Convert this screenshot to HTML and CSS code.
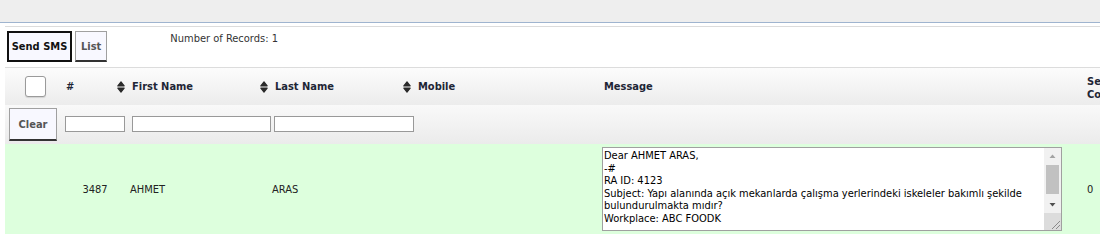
FILE: index.html
```html
<!DOCTYPE html>
<html>
<head>
<meta charset="utf-8">
<link rel="stylesheet" href="styles.css">
</head>
<body>
<div class="topbar"></div>
<div class="page">
  <div class="toolbar">
    <button class="btn btn-primary">Send SMS</button>
    <button class="btn">List</button>
    <div class="records">Number of Records: 1</div>
  </div>
  <div class="grid">
    <div class="row head">
      <div class="cell c-check"><input type="checkbox" class="chk"></div>
      <div class="cell">#</div>
      <div class="cell"><svg class="sort" viewBox="0 0 8 12" width="8" height="12"><path d="M4 0.8 L7.2 4.9 L0.8 4.9 Z M0.8 7.1 L7.2 7.1 L4 11.2 Z" fill="#2a2a2a" stroke="#2a2a2a" stroke-width="1.1" stroke-linejoin="round"/></svg>First Name</div>
      <div class="cell"><svg class="sort" viewBox="0 0 8 12" width="8" height="12"><path d="M4 0.8 L7.2 4.9 L0.8 4.9 Z M0.8 7.1 L7.2 7.1 L4 11.2 Z" fill="#2a2a2a" stroke="#2a2a2a" stroke-width="1.1" stroke-linejoin="round"/></svg>Last Name</div>
      <div class="cell"><svg class="sort" viewBox="0 0 8 12" width="8" height="12"><path d="M4 0.8 L7.2 4.9 L0.8 4.9 Z M0.8 7.1 L7.2 7.1 L4 11.2 Z" fill="#2a2a2a" stroke="#2a2a2a" stroke-width="1.1" stroke-linejoin="round"/></svg>Mobile</div>
      <div class="cell">Message</div>
      <div class="cell c-count">Sent Count</div>
    </div>
    <div class="row filter">
      <div class="cell c-clear"><button class="btn btn-clear">Clear</button></div>
      <div class="cell f2"><input type="text" class="inp w60"></div>
      <div class="cell f3"><input type="text" class="inp w139"></div>
      <div class="cell f4"><input type="text" class="inp w140"></div>
      <div class="cell"></div>
      <div class="cell"></div>
      <div class="cell"></div>
    </div>
    <div class="row data">
      <div class="cell"></div>
      <div class="cell c-id">3487</div>
      <div class="cell d3">AHMET</div>
      <div class="cell d4">ARAS</div>
      <div class="cell"></div>
      <div class="cell d6">
        <div class="msgbox">
          <textarea class="msg">Dear AHMET ARAS,
-#
RA ID: 4123
Subject: Yapı alanında açık mekanlarda çalışma yerlerindeki iskeleler bakımlı şekilde bulundurulmakta mıdır?
Workplace: ABC FOODK
</textarea>
          <div class="vscroll" aria-hidden="true">
            <span class="sb-btn"><svg width="17" height="17" viewBox="0 0 17 17"><path d="M5.5 10 L8.5 6.5 L11.5 10 Z" fill="#a3a3a3"/></svg></span>
            <span class="sb-track"><span class="sb-thumb"></span></span>
            <span class="sb-btn"><svg width="17" height="17" viewBox="0 0 17 17"><path d="M5.5 7 L11.5 7 L8.5 10.5 Z" fill="#505050"/></svg></span>
            <span class="sb-corner"><svg width="17" height="17" viewBox="0 0 17 17"><path d="M8 16 L16 8 M12 16 L16 12" stroke="#8a8a8a" stroke-width="1" fill="none"/></svg></span>
          </div>
        </div>
      </div>
      <div class="cell">0</div>
    </div>
  </div>
</div>
</body>
</html>
```
FILE: styles.css
```css
html { overflow: hidden; }
body {
  margin: 0;
  font-family: "DejaVu Sans Condensed", "DejaVu Sans", sans-serif;
  font-size: 11px;
  color: #222;
  background: #fff;
}
.topbar {
  height: 22px;
  background: #eeeeee;
  border-bottom: 1px solid #9fb4cf;
}
.page {
  margin: 3px 0 0 5px;
  width: 1143px;
}
.toolbar {
  display: flex;
  align-items: flex-start;
  gap: 3px;
  height: 42px;
  padding: 4px 0 0 2px;
  box-sizing: border-box;
  border-top: 1px solid #dcdcdc;
  border-bottom: 1px solid #dcdcdc;
}
.btn {
  font-family: inherit;
  font-size: 11px;
  font-weight: bold;
  color: #555;
  background: #f8f8ff;
  border: 1px solid #a0a0a0;
  border-bottom: 2px solid #333;
  height: 31px;
  padding: 0 5px;
  margin: 0;
  border-radius: 0;
}
.btn-primary {
  color: #111;
  border: 2px solid #111;
  width: 65px;
  padding: 0;
}
.records {
  margin-left: 60px;
  line-height: 13px;
  padding-top: 1px;
  color: #333;
}
.row {
  display: grid;
  grid-template-columns: 57px 66px 143px 143px 186px 483px 60px;
  align-items: center;
}
.cell {
  padding-left: 4px;
  min-width: 0;
}
.head {
  height: 37px;
  background: linear-gradient(#fcfcfc, #ececec);
  font-weight: bold;
  color: #1e2636;
}
.head .cell { display: flex; align-items: center; }
.c-check { padding-left: 20px; }
.chk {
  appearance: none;
  -webkit-appearance: none;
  width: 21px;
  height: 21px;
  margin: 0;
  border: 1px solid #9a9a9a;
  border-radius: 3px;
  background: #fff;
  box-shadow: 0 1px 1px rgba(0,0,0,0.12);
}
.sort {
  margin-left: -15px;
  margin-right: 7px;
  flex: none;
}
.c-count { line-height: 13px; padding-top: 2px; }
.filter {
  height: 39px;
  background: linear-gradient(#f9f9f9, #ebebeb);
}
.btn-clear { width: 48px; height: 33px; padding: 0; }
.f2 { padding-left: 3px; }
.f3 { padding-left: 4px; }
.f4 { padding-left: 3px; }
.inp {
  display: block;
  height: 16px;
  box-sizing: border-box;
  border: 1px solid #999;
  background: #fff;
  margin: -1px 0 0;
  padding: 0 2px;
  font: inherit;
}
.w60 { width: 60px; }
.w139 { width: 139px; }
.w140 { width: 140px; }
.data {
  height: 90px;
  background: #ddffdd;
  color: #222;
}
.c-id { padding-left: 0; text-align: center; }
.d3 { padding-left: 2px; }
.d4 { padding-left: 1px; }
.d6 { padding-left: 2px; display: flex; }
.msgbox {
  display: flex;
  width: 460px;
  height: 84px;
  box-sizing: border-box;
  border: 1px solid #a0a0a0;
  background: #fff;
}
.msg {
  flex: 1;
  min-width: 0;
  margin: 0;
  padding: 2px 1px;
  border: 0;
  outline: none;
  font-family: "DejaVu Sans Condensed", "DejaVu Sans", sans-serif;
  font-size: 11px;
  line-height: 12.6px;
  color: #000;
  background: #fff;
  overflow: hidden;
  resize: none;
}
.vscroll {
  width: 17px;
  flex: none;
  display: flex;
  flex-direction: column;
  background: #f1f1f1;
}
.sb-btn, .sb-corner {
  display: block;
  height: 17px;
  flex: none;
}
.sb-btn svg, .sb-corner svg { display: block; }
.sb-track {
  flex: 1;
  display: block;
}
.sb-thumb {
  display: block;
  height: 29px;
  margin: 0 2px;
  background: #c1c1c1;
}
.sb-corner { background: #dcdcdc; }
```
